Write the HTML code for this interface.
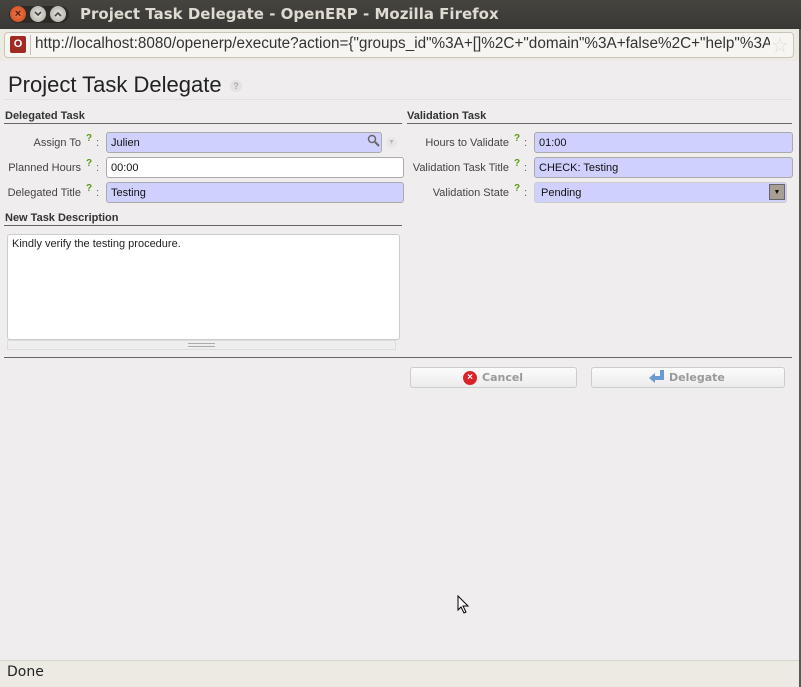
<!DOCTYPE html>
<html><head><style>
body{margin:0;width:801px;height:687px;position:relative;overflow:hidden;background:#efedee;font-family:"Liberation Sans",sans-serif;}
div,span{position:absolute;box-sizing:border-box;}
.lbl{font-size:11px;color:#444;text-align:right;white-space:nowrap;}
.q{font-size:10px;color:#5b9a12;font-weight:bold;}
.c{font-size:11px;color:#666;}
.in{height:21px;border:1px solid #aaa;border-radius:3px;background:#d0d0ff;font-size:11px;color:#111;padding:4px 0 0 4px;}
.sec{font-size:11px;font-weight:bold;color:#333;}
.ln{height:1px;background:#666;}
.btn{height:21px;border:1px solid #ccc;border-radius:3px;background:linear-gradient(#fbfbfb,#ececec);}
</style></head><body>
<div style="left:0;top:0;width:801px;height:29px;background:linear-gradient(#45443f,#393834);"></div>
<div style="left:9px;top:6px;width:60px;height:17px;border-radius:9px;background:#2c2b28;"></div>
<div style="left:10px;top:6px;width:16px;height:16px;border-radius:50%;background:radial-gradient(#f07a4c,#c9471c);color:#4a1c0a;font-size:11px;font-weight:bold;text-align:center;line-height:16px;">×</div>
<div style="left:30px;top:6px;width:16px;height:16px;border-radius:50%;background:radial-gradient(#e8e6e1,#aaa79e);"></div>
<svg style="position:absolute;left:33px;top:10px" width="10" height="8"><path d="M2 2l3 3 3-3" fill="none" stroke="#444" stroke-width="1.6"/></svg>
<div style="left:50px;top:6px;width:16px;height:16px;border-radius:50%;background:radial-gradient(#e8e6e1,#aaa79e);"></div>
<svg style="position:absolute;left:53px;top:10px" width="10" height="8"><path d="M2 6l3-3 3 3" fill="none" stroke="#444" stroke-width="1.6"/></svg>
<div style="left:80px;top:5px;font-size:15px;font-weight:bold;color:#dfdbd2;font-family:'DejaVu Sans',sans-serif;white-space:nowrap;">Project Task Delegate - OpenERP - Mozilla Firefox</div>
<div style="left:0;top:29px;width:801px;height:32px;background:#edeae4;"></div>
<div style="left:4px;top:32px;width:790px;height:26px;border:1px solid #cbc5b8;border-radius:4px;background:#f7f5f1;"></div>
<div style="left:10px;top:36px;width:16px;height:17px;border-radius:2px;background:#a12a22;color:#fff;font-size:11px;font-weight:bold;text-align:center;line-height:17px;">O</div>
<div style="left:30px;top:35px;width:1px;height:20px;background:#c9c3b6;"></div>
<div style="left:35px;top:35px;font-size:15.3px;color:#333;white-space:nowrap;width:735px;overflow:hidden;">http://localhost:8080/openerp/execute?action={"groups_id"%3A+[]%2C+"domain"%3A+false%2C+"help"%3A+</div>
<div style="left:771px;top:33px;font-size:20px;color:#e0ddd6;">☆</div>
<div style="left:799px;top:29px;width:2px;height:658px;background:#5a5852;"></div>
<div style="left:8px;top:72px;font-size:22px;color:#222;white-space:nowrap;">Project Task Delegate</div>
<div style="left:230px;top:80px;width:12px;height:12px;border-radius:50%;background:#e4e2e2;color:#aaa;font-size:9px;text-align:center;line-height:12px;font-weight:bold;">?</div>
<div style="left:4px;top:99px;width:788px;height:1px;background:#e2e0e0;"></div>
<div class="sec" style="left:5px;top:110px;">Delegated Task</div>
<div class="ln" style="left:4px;top:123px;width:398px;"></div>
<div class="sec" style="left:407px;top:110px;">Validation Task</div>
<div class="ln" style="left:407px;top:123px;width:385px;"></div>

<div class="lbl" style="right:720px;top:137px;">Assign To</div><div class="q" style="left:86px;top:133px;">?</div><div class="c" style="left:96px;top:137px;">:</div>
<div class="in" style="left:106px;top:132px;width:276px;">Julien</div>
<svg style="position:absolute;left:367px;top:134px" width="13" height="13"><circle cx="5" cy="5" r="3.5" fill="none" stroke="#666" stroke-width="1.5"/><path d="M8 8l4 4" stroke="#666" stroke-width="2"/></svg>
<div style="left:386px;top:137px;width:11px;height:11px;border-radius:50%;background:#e8e6e6;color:#bbb;font-size:7px;text-align:center;line-height:11px;">▼</div>
<div class="lbl" style="right:720px;top:162px;">Planned Hours</div><div class="q" style="left:86px;top:158px;">?</div><div class="c" style="left:96px;top:162px;">:</div>
<div class="in" style="left:106px;top:157px;width:298px;background:#fff;">00:00</div>
<div class="lbl" style="right:720px;top:187px;">Delegated Title</div><div class="q" style="left:86px;top:183px;">?</div><div class="c" style="left:96px;top:187px;">:</div>
<div class="in" style="left:106px;top:182px;width:298px;">Testing</div>

<div class="lbl" style="right:292px;top:137px;">Hours to Validate</div><div class="q" style="left:514px;top:133px;">?</div><div class="c" style="left:524px;top:137px;">:</div>
<div class="in" style="left:534px;top:132px;width:259px;">01:00</div>
<div class="lbl" style="right:292px;top:162px;">Validation Task Title</div><div class="q" style="left:514px;top:158px;">?</div><div class="c" style="left:524px;top:162px;">:</div>
<div class="in" style="left:534px;top:157px;width:259px;">CHECK: Testing</div>
<div class="lbl" style="right:292px;top:187px;">Validation State</div><div class="q" style="left:514px;top:183px;">?</div><div class="c" style="left:524px;top:187px;">:</div>
<div class="in" style="left:534px;top:182px;width:253px;border-color:#ccc;padding-left:6px;">Pending</div>
<div style="left:769px;top:184px;width:16px;height:16px;background:#a89f94;border:1px solid #666;color:#111;font-size:7px;text-align:center;line-height:15px;">▼</div>

<div class="sec" style="left:5px;top:212px;">New Task Description</div>
<div class="ln" style="left:4px;top:225px;width:398px;"></div>
<div style="left:7px;top:234px;width:393px;height:106px;border:1px solid #ccc;border-radius:3px;background:#fff;font-size:11px;color:#222;padding:3px 0 0 4px;">Kindly verify the testing procedure.</div>
<div style="left:7px;top:340px;width:389px;height:10px;border:1px solid #ddd;background:#eee;"></div>
<div style="left:188px;top:343px;width:27px;height:4px;border-top:1px solid #aaa;border-bottom:1px solid #aaa;"></div>
<div class="ln" style="left:4px;top:357px;width:788px;"></div>

<div class="btn" style="left:410px;top:367px;width:167px;"></div>
<div style="left:463px;top:371px;width:14px;height:14px;border-radius:50%;background:#d8232a;color:#fff;font-size:10px;font-weight:bold;text-align:center;line-height:14px;">×</div>
<div style="left:482px;top:371px;font-size:11px;font-weight:bold;color:#999;font-family:'DejaVu Sans',sans-serif;">Cancel</div>
<div class="btn" style="left:591px;top:367px;width:194px;"></div>
<svg style="position:absolute;left:648px;top:369px" width="18" height="16"><path d="M14 1v8H6" fill="none" stroke="#6a9bd0" stroke-width="4"/><path d="M1 9l6-5v10z" fill="#6a9bd0"/></svg>
<div style="left:669px;top:371px;font-size:11px;font-weight:bold;color:#999;font-family:'DejaVu Sans',sans-serif;">Delegate</div>

<svg style="position:absolute;left:457px;top:595px" width="14" height="20"><path d="M1 1v14l3-3 3 6 2-1-3-6h5z" fill="#fff" stroke="#000" stroke-width="1"/></svg>

<div style="left:0;top:660px;width:799px;height:27px;background:#edeae3;border-top:1px solid #d8d4cc;"></div>
<div style="left:7px;top:664px;font-size:14px;color:#222;font-family:'DejaVu Sans',sans-serif;">Done</div>
</body></html>
